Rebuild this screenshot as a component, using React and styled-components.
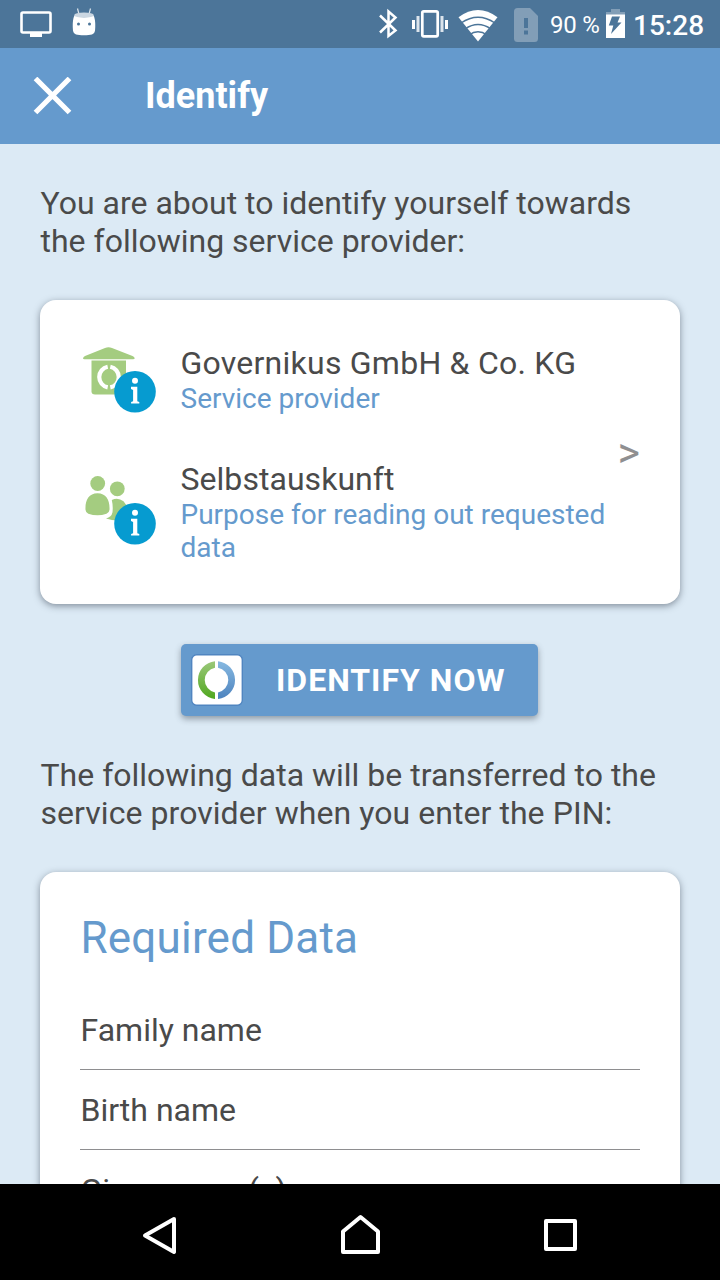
import React from 'react';
import styled, { createGlobalStyle } from 'styled-components';

const GlobalStyle = createGlobalStyle`
  * { box-sizing: border-box; }
  body { margin: 0; background: #dceaf5; font-family: Roboto, 'Liberation Sans', sans-serif; }
  svg { display: block; flex: none; }
`;

const Screen = styled.div`
  display: flex;
  flex-direction: column;
  width: 720px;
  height: 1280px;
  overflow: hidden;
  background: #dceaf5;
  color: #4a4a4a;
`;

const StatusBar = styled.div`
  display: flex;
  flex: none;
  align-items: center;
  justify-content: space-between;
  height: 48px;
  padding: 0 15px 0 20px;
  background: #4c7599;
  color: #fff;
`;

const StatusGroup = styled.div`
  display: flex;
  align-items: center;
  white-space: nowrap;
`;

const BatteryLevel = styled.span`
  margin-left: 11px;
  width: 56px;
  padding-top: 1px;
  font-size: 24px;
  line-height: 28px;
  letter-spacing: -0.2px;
`;

const Clock = styled.span`
  width: 72px;
  margin-left: 8px;
  padding-top: 3px;
  font-size: 28px;
  font-weight: 500;
  line-height: 34px;
`;

const TitleBar = styled.header`
  display: flex;
  flex: none;
  align-items: center;
  gap: 73px;
  height: 96px;
  padding-left: 33px;
  background: #659acd;
`;

const Title = styled.h1`
  margin: 0;
  color: #fff;
  font-size: 36px;
  font-weight: 700;
  line-height: 42px;
`;

const Content = styled.main`
  display: flex;
  flex: 1;
  flex-direction: column;
  min-height: 0;
  padding: 40px 40px 0;
  overflow: hidden;
`;

const Paragraph = styled.p`
  margin: 0;
  height: 76px;
  padding-left: 0.5px;
  font-size: 32px;
  line-height: 38px;
  white-space: nowrap;
`;

const Tracked = styled.span`
  letter-spacing: ${(p) => p.$spacing};
`;

const Card = styled.section`
  flex: none;
  margin-top: 40px;
  border-radius: 16px;
  background: #fff;
  box-shadow: 0 2px 7px rgba(40, 50, 65, 0.5);
`;

const ProviderCard = styled(Card)`
  display: flex;
  align-items: center;
  justify-content: space-between;
  height: 304px;
  padding: 3px 40px 0;
`;

const ProviderList = styled.div`
  display: flex;
  flex-direction: column;
  gap: 45px;
  padding-top: 1px;
`;

const ProviderRow = styled.div`
  display: flex;
  gap: 22.5px;
`;

const ProviderText = styled.div`
  width: 430px;
`;

const ProviderName = styled.div`
  font-size: 32px;
  line-height: 38px;
  letter-spacing: ${(p) => p.$spacing};
`;

const ProviderLabel = styled.div`
  color: #659acd;
  font-size: 28px;
  line-height: 33px;
`;

const Chevron = styled.span`
  padding-bottom: 4px;
  color: #8f8f91;
  font-size: 43px;
  line-height: 42px;
`;

const IdentifyButton = styled.button`
  display: flex;
  flex: none;
  align-items: center;
  align-self: center;
  gap: 33px;
  width: 357px;
  height: 72px;
  margin: 40px 2px 40px 0;
  padding: 0 0 0 10.5px;
  border: 0;
  border-radius: 5px;
  background: #659acd;
  box-shadow: 0 3px 6px rgba(50, 60, 70, 0.45);
  color: #fff;
  font: 700 32px/38px Roboto, sans-serif;
  letter-spacing: 1px;
  white-space: nowrap;
`;

const DataCard = styled(Card)`
  padding: 40px 40px 0;
`;

const DataHeading = styled.h2`
  margin: 0 0 26px;
  padding-left: 0.5px;
  color: #659acd;
  font-size: 44px;
  font-weight: 400;
  line-height: 52px;
  letter-spacing: 0.2px;
`;

const DataRow = styled.div`
  height: 80px;
  padding: 21px 0 0 0.5px;
  border-bottom: 1px solid #8e8e90;
  font-size: 32px;
  line-height: 38px;
`;

const NavBar = styled.nav`
  display: flex;
  flex: none;
  align-items: center;
  justify-content: space-between;
  height: 96px;
  padding: 6px 140px 0;
  background: #000;
`;

const InfoBadge = ({ cy }) => (
  <g>
    <circle cx="55" cy={cy} r="20.8" fill="#069bd0" />
    <circle cx="55" cy={cy - 11} r="3" fill="#fff" />
    <path
      d={`M51 ${cy - 5}h6.3v14.5l2 .7v1.5h-8.2v-1.5l2-.7v-11.3l-2.1-1z`}
      fill="#fff"
    />
  </g>
);

const ProviderIcon = () => (
  <svg width="78" height="70" viewBox="0 -0.8 78 70">
    <g fill="#a4cc80">
      <path d="M3 13.4Q3.400 12 5 11.200L25 3.200Q28.500 1.700 32 3.200L52.500 11.200Q54.500 12 54.700 13.400Q54.700 14.500 53 14.500H4.500Q3 14.500 3 13.400Z" />
      <path d="M11.500 15.800H46V46.500Q46 49.700 42.500 49.700H15Q11.500 49.700 11.500 46.500Z" />
    </g>
    <path d="M27.700 22A10.500 10.500 0 0 0 27.700 42.600M30.300 22A10.500 10.500 0 0 1 30.300 42.600" fill="none" stroke="#fff" strokeWidth="4.200" />
    <InfoBadge cy={47} />
  </svg>
);

const PurposeIcon = () => (
  <svg width="78" height="86" viewBox="0 -0.8 78 86">
    <g fill="#a4cc80">
      <circle cx="17.700" cy="22.700" r="7.400" />
      <circle cx="37.300" cy="28" r="7.400" />
      <path d="M5.500 49C5 40 8.500 32.500 17.500 32.500C26.500 32.500 30 40 29.500 49Q29.300 52 26.500 52.900Q17.500 56 8.300 52.900Q5.700 52 5.500 49Z" />
      <path d="M31.800 39.200Q38 36.200 43.500 40.500Q48 45 48.500 53L42 59.500Q34 60.500 26 57.700Q31.500 56.500 32.500 51.500Q33.200 45 31.800 39.200Z" />
    </g>
    <InfoBadge cy={63} />
  </svg>
);

const AusweisLogo = () => (
  <svg width="52" height="52" viewBox="0 0 52 52">
    <defs>
      <linearGradient id="green" x2="0" y2="1">
        <stop offset="0" stopColor="#9bc87a" />
        <stop offset="1" stopColor="#50a71f" />
      </linearGradient>
      <linearGradient id="blue" x2="0" y2="1">
        <stop offset="0" stopColor="#87b9e1" />
        <stop offset="1" stopColor="#4d83be" />
      </linearGradient>
    </defs>
    <rect x=".7" y=".7" width="50.600" height="50.600" rx="5" fill="#fff" stroke="#5085c0" strokeWidth="1.400" />
    <path d="M24 7.200A19 19 0 0 0 24 45V38.400A12.500 12.500 0 0 1 24 13.800Z" fill="url(#green)" />
    <path d="M27 7.200A19 19 0 0 1 27 45V38.400A12.500 12.500 0 0 0 27 13.800Z" fill="url(#blue)" />
  </svg>
);

const NotificationIcons = () => (
  <svg width="80" height="48" viewBox="20 0 80 48">
    <rect x="21.500" y="12.500" width="29" height="20" rx="1.500" fill="none" stroke="#fff" strokeWidth="2.600" />
    <path d="M30 33h12v4H30z" fill="#fff" />
    <path d="M77.500 8.500l1.300 5M90.500 8.500l-1.300 5" stroke="#dbe4ec" strokeWidth="1.200" />
    <path d="M74.500 15.500C72.500 19 72.500 26 73 30.500C73.500 34.500 77 35.300 84 35.300S94.500 34.500 95 30.500C95.500 26 95.500 19 93.500 15.500Z" fill="#fff" />
    <ellipse cx="84" cy="15.200" rx="9.800" ry="2.700" fill="#cbd7e2" />
    <circle cx="78.500" cy="24" r="1.500" fill="#4c7599" />
    <circle cx="89.500" cy="24" r="1.500" fill="#4c7599" />
  </svg>
);

const SignalIcons = () => (
  <svg width="161" height="48" viewBox="378 0 161 48">
    <path d="M380 15.500L395.500 30.500L388.500 36V11.500L395.500 17.500L380 32.500" fill="none" stroke="#fff" strokeWidth="2.500" />
    <rect x="422.300" y="11.300" width="15.400" height="25" rx="1.500" fill="none" stroke="#fff" strokeWidth="2.700" />
    <path d="M413.500 20v9M446.500 20v9" stroke="#fff" strokeWidth="3" />
    <path d="M418 16v16M442 16v16" stroke="#dbe4ec" strokeWidth="3" />
    <path d="M458.500 17.200Q478 2.800 497.500 17.200L478 41.500Z" fill="#fff" />
    <g fill="none" stroke="#4c7599" strokeWidth="1.500">
      <path d="M461 23Q478 11.500 495 23" />
      <path d="M465 29Q478 20 491 29" />
      <path d="M469 35Q478 28.500 487 35" />
    </g>
    <path d="M517.500 8H530L538 16V38.500Q538 42 534.500 42H517.500Q514 42 514 38.500V11.500Q514 8 517.500 8Z" fill="#829eb7" />
    <path d="M524 18h4v10h-4zM524 30.500h4v4h-4z" fill="#4c7599" />
  </svg>
);

const BatteryIcon = () => (
  <svg width="19" height="48" viewBox="606 0 19 48">
    <path d="M611 9h9v3h5v3h-19v-3h5z" fill="#829eb7" />
    <path d="M606 14.500h19V38h-19z" fill="#fff" />
    <path d="M612 16.500h8l-2.500 6h4L611 34l2.300-8.500h-4.500z" fill="#4c7599" />
  </svg>
);

const CloseIcon = () => (
  <svg width="39" height="38" viewBox="0 0 39 38">
    <path d="M2.500 1.500L36.500 35.500M36.500 1.500L2.500 35.500" stroke="#fff" strokeWidth="5.200" />
  </svg>
);

const BackIcon = () => (
  <svg width="40" height="42" viewBox="140 1214 40 42">
    <path d="M174 1219L145 1235.500L174 1252Z" fill="none" stroke="#fff" strokeWidth="4" strokeLinejoin="round" />
  </svg>
);

const HomeIcon = () => (
  <svg width="42" height="42" viewBox="339 1214 42 42">
    <path d="M343 1252V1231.500L360.500 1217L378 1231.500V1252Z" fill="none" stroke="#fff" strokeWidth="4" strokeLinejoin="round" />
  </svg>
);

const RecentIcon = () => (
  <svg width="40" height="42" viewBox="540 1214 40 42">
    <rect x="546" y="1221" width="29" height="28" fill="none" stroke="#fff" strokeWidth="4" strokeLinejoin="round" />
  </svg>
);

const providers = [
  { icon: <ProviderIcon />, name: 'Governikus GmbH & Co. KG', label: 'Service provider', spacing: '0.24px' },
  { icon: <PurposeIcon />, name: 'Selbstauskunft', label: 'Purpose for reading out requested data', spacing: '0.04px' },
];

const fields = ['Family name', 'Birth name', 'Given name(s)'];

export default function App() {
  return (
    <Screen>
      <GlobalStyle />
      <StatusBar>
        <NotificationIcons />
        <StatusGroup>
          <SignalIcons />
          <BatteryLevel>90 %</BatteryLevel>
          <BatteryIcon />
          <Clock>15:28</Clock>
        </StatusGroup>
      </StatusBar>
      <TitleBar>
        <CloseIcon />
        <Title>Identify</Title>
      </TitleBar>
      <Content>
        <Paragraph>
          You are about to identify yourself towards
          <br />
          the following service provider:
        </Paragraph>
        <ProviderCard>
          <ProviderList>
            {providers.map((p) => (
              <ProviderRow key={p.name}>
                {p.icon}
                <ProviderText>
                  <ProviderName $spacing={p.spacing}>{p.name}</ProviderName>
                  <ProviderLabel>{p.label}</ProviderLabel>
                </ProviderText>
              </ProviderRow>
            ))}
          </ProviderList>
          <Chevron>&gt;</Chevron>
        </ProviderCard>
        <IdentifyButton>
          <AusweisLogo />
          IDENTIFY NOW
        </IdentifyButton>
        <Paragraph>
          The following data will be transferred to the
          <br />
          <Tracked $spacing="0.06px">service provider when you enter the PIN:</Tracked>
        </Paragraph>
        <DataCard>
          <DataHeading>Required Data</DataHeading>
          {fields.map((f) => (
            <DataRow key={f}>{f}</DataRow>
          ))}
        </DataCard>
      </Content>
      <NavBar>
        <BackIcon />
        <HomeIcon />
        <RecentIcon />
      </NavBar>
    </Screen>
  );
}
